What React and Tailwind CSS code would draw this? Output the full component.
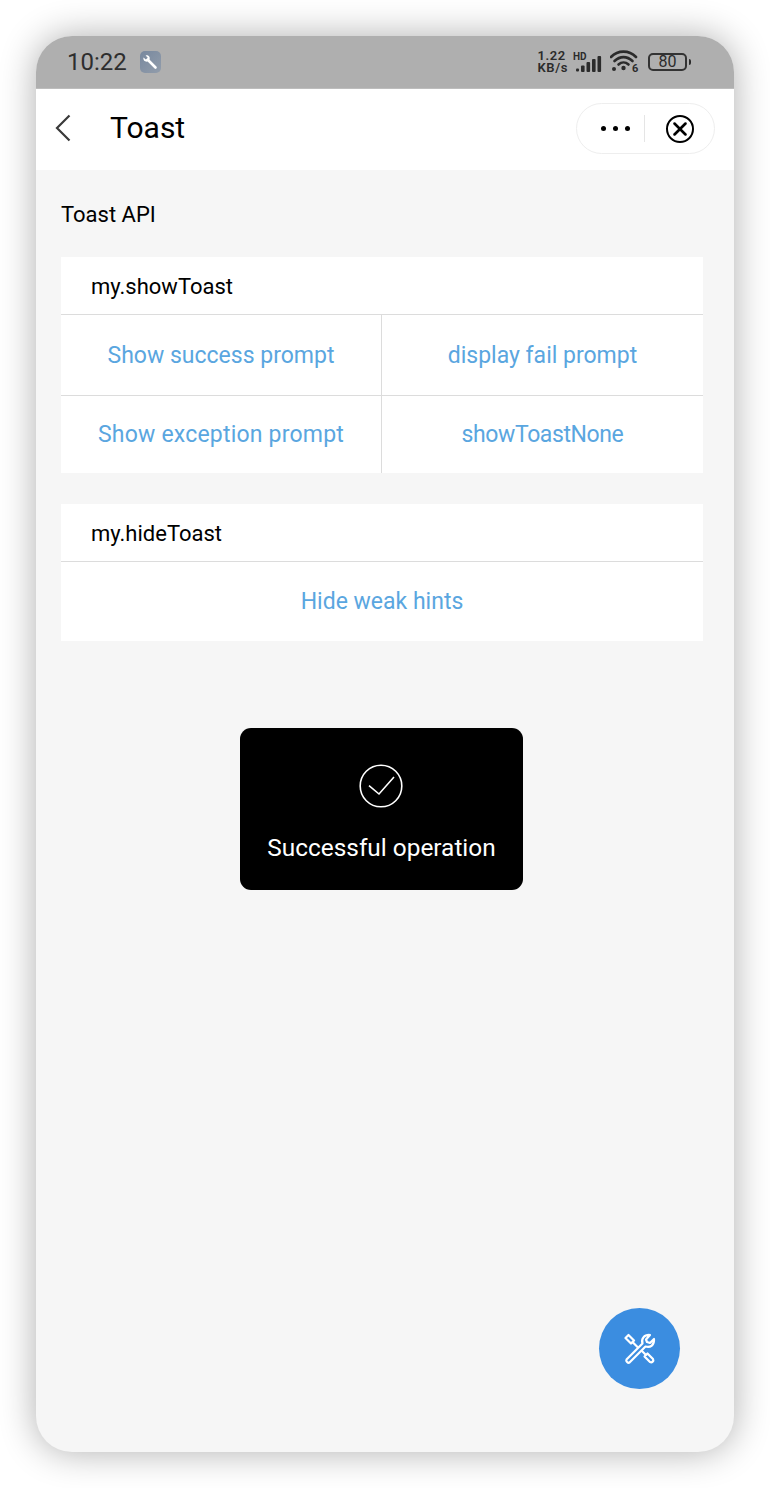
import { X } from 'lucide-react';

const FONT = "font-['Roboto','Liberation_Sans',sans-serif]";

function WrenchBadge() {
  return (
    <div className="ml-[13px] flex h-[22px] w-[21px] items-center justify-center rounded-[5px] bg-gradient-to-br from-[#78889e] to-[#929dab]">
      <svg width="16" height="16" viewBox="0 0 16 16" fill="none">
        <path d="M13.5 13.5 L6.5 6.5" stroke="#fff" strokeWidth="2.6" strokeLinecap="round" />
        <path d="M1.5 3.5 L3.8 5.6 L5.8 3.8 L3.6 1.4 C6 0.6 8.4 2.6 7.6 5.4 L5.6 7.6 C3 8.2 0.8 6 1.5 3.5 Z" fill="#fff" />
      </svg>
    </div>
  );
}

function SignalBars() {
  return (
    <svg width="27" height="24" viewBox="0 0 27 24" className="mt-[4px]">
      <rect x="0" y="16.5" width="3" height="3" rx="1" fill="#2b2b2b" />
      <rect x="5" y="13.5" width="3.6" height="6.5" rx="1" fill="#2b2b2b" />
      <rect x="10.5" y="10" width="3.6" height="10" rx="1" fill="#2b2b2b" />
      <rect x="16" y="7" width="3.6" height="13" rx="1" fill="#2b2b2b" />
      <rect x="21.5" y="4" width="3.6" height="16" rx="1" fill="#2b2b2b" />
    </svg>
  );
}

function Wifi() {
  return (
    <div className="relative ml-[7px] h-[26px] w-[29px]">
      <svg width="29" height="24" viewBox="0 0 29 24" fill="none">
        <path d="M1 8 C8 0.8 19 0.8 26 8" stroke="#2b2b2b" strokeWidth="2.6" strokeLinecap="round" />
        <path d="M4.5 12 C10 6.8 17 6.8 22.5 12" stroke="#2b2b2b" strokeWidth="2.6" strokeLinecap="round" />
        <path d="M8.5 15.5 C11.5 12.8 15.5 12.8 18.5 15.5" stroke="#2b2b2b" strokeWidth="2.6" strokeLinecap="round" />
        <circle cx="13.5" cy="19" r="2.2" fill="#2b2b2b" />
        <circle cx="4" cy="20" r="2" fill="#2b2b2b" />
      </svg>
      <span className="absolute bottom-[1px] left-[22px] text-[11px] font-bold leading-none text-[#2b2b2b]">6</span>
    </div>
  );
}

function Battery() {
  return (
    <div className="ml-[9px] flex items-center">
      <div className="flex h-[18px] w-[39px] items-center justify-center rounded-[5px] border-2 border-[#333333] text-[16px] leading-none text-[#2b2b2b]">
        80
      </div>
      <div className="ml-[2px] h-[6px] w-[2px] rounded-r-sm bg-[#2b2b2b]" />
    </div>
  );
}

function StatusBar() {
  return (
    <div className="flex h-[53px] items-center justify-between border-b border-[#bdbdbd] bg-[#afafaf] pl-[31px] pr-[43px]">
      <div className="flex items-center">
        <span className="text-[24px] leading-none text-[#2e2e2e]">10:22</span>
        <WrenchBadge />
      </div>
      <div className="flex items-center">
        <div className="mr-[8px] flex flex-col text-[13px] font-semibold leading-[12px] tracking-[0.6px] text-[#2b2b2b]">
          <span>1.22</span>
          <span>KB/s</span>
        </div>
        <div className="relative">
          <span className="absolute left-[-3px] top-[4px] text-[10px] font-bold leading-none text-[#2b2b2b]">HD</span>
          <SignalBars />
        </div>
        <Wifi />
        <Battery />
      </div>
    </div>
  );
}

function NavBar() {
  return (
    <div className="flex h-[81px] items-center bg-white pb-[4px] pl-[19px] pr-[19px]">
      <svg width="16" height="28" viewBox="0 0 16 28" fill="none">
        <path d="M14.5 1.5 L2 14 L14.5 26.5" stroke="#3a3a3a" strokeWidth="2.2" />
      </svg>
      <span className="ml-[39px] text-[30px] leading-none text-black">Toast</span>
      <div className="ml-auto mt-[2px] flex h-[51px] w-[139px] items-center rounded-full border border-[#eeeeee] bg-white">
        <div className="flex w-[67px] justify-center gap-[7px] pl-[9px]">
          <span className="h-[5px] w-[5px] rounded-full bg-black" />
          <span className="h-[5px] w-[5px] rounded-full bg-black" />
          <span className="h-[5px] w-[5px] rounded-full bg-black" />
        </div>
        <div className="h-[27px] w-px bg-[#e5e5e5]" />
        <div className="ml-[21px] flex h-[28px] w-[28px] items-center justify-center rounded-full border-[2.5px] border-black">
          <X size={22} strokeWidth={2.8} color="#000" />
        </div>
      </div>
    </div>
  );
}

function SectionHead({ title }) {
  return (
    <div className="flex h-[58px] items-center border-b border-[#dcdcdc] pl-[30px] pt-[1px] text-[22px] text-black">
      {title}
    </div>
  );
}

function ActionCell({ label, className }) {
  return (
    <div className={`flex items-center justify-center pt-[2px] text-[23px] text-[#5aa6e0] ${className}`}>
      {label}
    </div>
  );
}

function Toast() {
  return (
    <div className="absolute left-[204px] top-[692px] flex h-[162px] w-[283px] flex-col items-center rounded-[11px] bg-black pt-[36px]">
      <svg width="44" height="44" viewBox="0 0 44 44" fill="none" className="mr-[2px]">
        <circle cx="22" cy="22" r="20.8" stroke="#fff" strokeWidth="1.6" />
        <path d="M10 21.7 L20 30 L35 13" stroke="#fff" strokeWidth="1.6" />
      </svg>
      <span className="mt-[26px] text-[24.4px] leading-[28px] text-white">Successful operation</span>
    </div>
  );
}

function Fab() {
  return (
    <div className="absolute left-[563px] top-[1272px] flex h-[81px] w-[81px] items-center justify-center rounded-full bg-[#3b8de0]">
      <svg width="32" height="32" viewBox="0 0 32 32" fill="none" stroke="#fff" strokeWidth="2.2" strokeLinejoin="round" strokeLinecap="round">
        {/* wrench */}
        <path d="M2.5 26.5 L18.5 10.5 C17 6 20 1.5 26 2 L22 6.5 L23 9 L26 10 L30 6 C30.5 12 26.5 15 21.5 13.5 L5.5 29.5 C4 30.5 1.5 28 2.5 26.5 Z" />
        {/* screwdriver */}
        <path d="M1.5 5 L4.5 2 L10 7.5 L7 10.5 Z" />
        <path d="M9 9.5 L13.5 14" />
        <path d="M18 18 L21.5 21.5" />
        <path d="M20.5 23.5 L23.5 20.5 L29 26 C30 28 28 30 26 29 Z" />
      </svg>
    </div>
  );
}

export default function App() {
  return (
    <div className={`h-[1488px] w-[770px] overflow-hidden bg-white pl-[36px] pt-[36px] ${FONT}`}>
      <div className="relative flex h-[1416px] w-[698px] flex-col overflow-hidden rounded-[36px] bg-[#f6f6f6] shadow-[0_0_36px_rgba(0,0,0,0.32)]">
        <StatusBar />
        <NavBar />
        <div className="flex-1 pl-[25px] pr-[31px]">
          <div className="flex h-[87px] items-center pt-[1px] text-[22px] text-black">Toast API</div>
          <div className="bg-white">
            <SectionHead title="my.showToast" />
            <div className="grid grid-cols-2">
              <ActionCell label="Show success prompt" className="h-[81px] border-b border-r border-[#dcdcdc]" />
              <ActionCell label="display fail prompt" className="h-[81px] border-b border-[#dcdcdc]" />
              <ActionCell label="Show exception prompt" className="h-[77px] border-r border-[#dcdcdc] tracking-[0.2px]" />
              <ActionCell label="showToastNone" className="h-[77px] tracking-[-0.4px]" />
            </div>
          </div>
          <div className="mt-[31px] bg-white">
            <SectionHead title="my.hideToast" />
            <ActionCell label="Hide weak hints" className="h-[79px]" />
          </div>
        </div>
        <Toast />
        <Fab />
      </div>
    </div>
  );
}
